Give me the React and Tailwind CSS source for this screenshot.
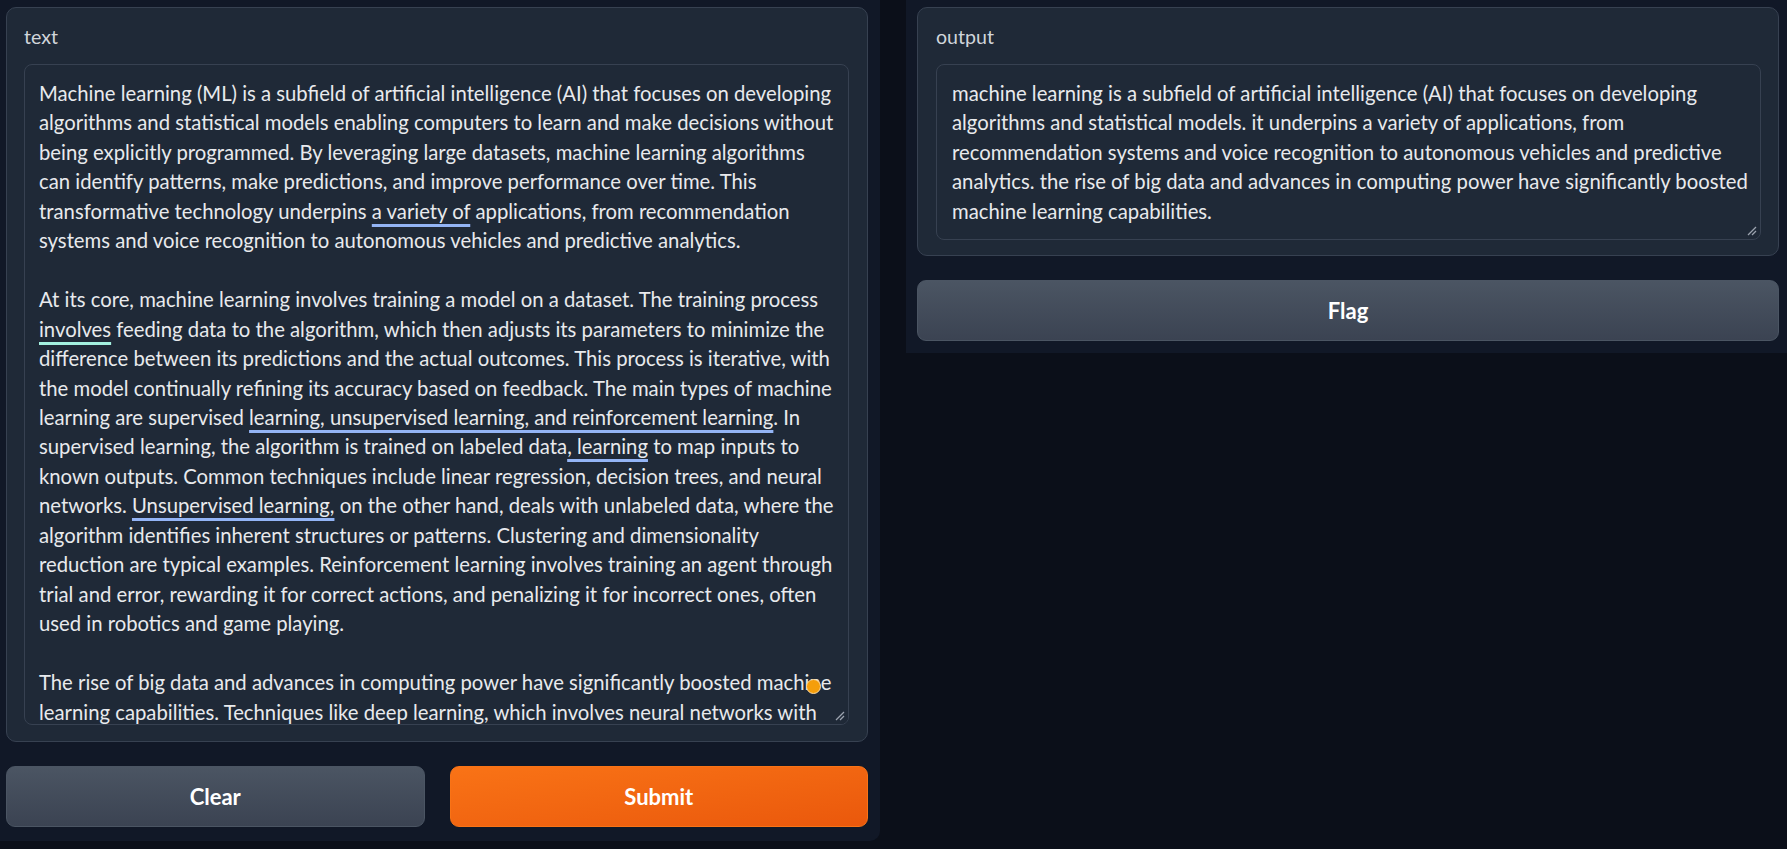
import React from "react";

const font = { fontFamily: "Lato, 'Noto Sans', sans-serif" };

function U({ children, teal }) {
  return (
    <span
      className={
        "underline decoration-[3px] underline-offset-[5px] [text-decoration-skip-ink:none] " +
        (teal ? "decoration-[#a3f0df]" : "decoration-[#93b4f5]")
      }
    >
      {children}
    </span>
  );
}

function Resize() {
  return (
    <svg className="absolute right-[3px] bottom-[3px]" width="10" height="10" viewBox="0 0 10 10">
      <line x1="1" y1="9" x2="9" y2="1" stroke="#9ca3af" strokeWidth="1.3" />
      <line x1="5" y1="9" x2="9" y2="5" stroke="#9ca3af" strokeWidth="1.3" />
    </svg>
  );
}

const leftLines = [
  "Machine learning (ML) is a subfield of artificial intelligence (AI) that focuses on developing",
  "algorithms and statistical models enabling computers to learn and make decisions without",
  "being explicitly programmed. By leveraging large datasets, machine learning algorithms",
  "can identify patterns, make predictions, and improve performance over time. This",
  <>transformative technology underpins <U>a variety of</U> applications, from recommendation</>,
  "systems and voice recognition to autonomous vehicles and predictive analytics.",
  "\u00a0",
  "At its core, machine learning involves training a model on a dataset. The training process",
  <><U teal>involves</U> feeding data to the algorithm, which then adjusts its parameters to minimize the</>,
  "difference between its predictions and the actual outcomes. This process is iterative, with",
  "the model continually refining its accuracy based on feedback. The main types of machine",
  <>learning are supervised <U>learning, unsupervised learning, and reinforcement learning</U>. In</>,
  <>supervised learning, the algorithm is trained on labeled data<U>, learning</U> to map inputs to</>,
  "known outputs. Common techniques include linear regression, decision trees, and neural",
  <>networks. <U>Unsupervised learning,</U> on the other hand, deals with unlabeled data, where the</>,
  "algorithm identifies inherent structures or patterns. Clustering and dimensionality",
  "reduction are typical examples. Reinforcement learning involves training an agent through",
  "trial and error, rewarding it for correct actions, and penalizing it for incorrect ones, often",
  "used in robotics and game playing.",
  "\u00a0",
  "The rise of big data and advances in computing power have significantly boosted machine",
  "learning capabilities. Techniques like deep learning, which involves neural networks with",
];

const rightLines = [
  "machine learning is a subfield of artificial intelligence (AI) that focuses on developing",
  "algorithms and statistical models. it underpins a variety of applications, from",
  "recommendation systems and voice recognition to autonomous vehicles and predictive",
  "analytics. the rise of big data and advances in computing power have significantly boosted",
  "machine learning capabilities.",
];

function Lines({ lines }) {
  return lines.map((l, i) => (
    <div key={i} className="whitespace-pre">
      {l}
    </div>
  ));
}

function Btn({ children, primary, className = "" }) {
  return (
    <button
      className={
        "h-[61px] rounded-[9px] border text-[22px] font-bold text-white " +
        (primary
          ? "border-[#f97316] bg-gradient-to-br from-[#f97316] to-[#ea580c] "
          : "border-[#4b5563] bg-gradient-to-b from-[#4b5563] to-[#3b4352] ") +
        className
      }
      style={font}
    >
      {children}
    </button>
  );
}

export default function App() {
  return (
    <div className="w-[1787px] h-[849px] bg-[#0b0f19] flex items-start gap-[26px] overflow-hidden" style={font}>
      <div className="w-[880px] shrink-0 bg-[#111827] rounded-br-[10px] pl-[6px] pr-[12px] pt-[7px] pb-[14px] flex flex-col gap-[24px]">
        <div className="bg-[#1f2937] border border-[#374151] rounded-[10px] pl-[17px] pr-[18px] pt-[14px] pb-[16px]">
          <div className="text-[19.6px] leading-[29px] text-[#d1d5db] mb-[13px]">text</div>
          <div className="relative h-[661px] border border-[#374151] rounded-[8px] bg-[#1f2937] overflow-hidden">
            <div className="pl-[14px] pt-[14px] text-[20.3px] leading-[29.45px] text-[#e8eaed]">
              <Lines lines={leftLines} />
            </div>
            <div className="absolute left-[781px] top-[614px] w-[15px] h-[15px] rounded-full bg-[#f59e0b] border border-[#fcd9a0]" />
            <div className="absolute right-0 bottom-0 w-[14px] h-[14px] bg-[#1f2937]" />
            <Resize />
          </div>
        </div>
        <div className="flex gap-[25px]">
          <Btn className="flex-1">Clear</Btn>
          <Btn primary className="flex-1">Submit</Btn>
        </div>
      </div>
      <div className="flex-1 bg-[#111827] pl-[11px] pr-[8px] pt-[7px] pb-[12px] flex flex-col gap-[24px]">
        <div className="bg-[#1f2937] border border-[#374151] rounded-[10px] pl-[18px] pr-[17px] pt-[14px] pb-[15px]">
          <div className="text-[19.6px] leading-[29px] text-[#d1d5db] mb-[13px]">output</div>
          <div className="relative h-[176px] border border-[#374151] rounded-[8px] bg-[#1f2937] overflow-hidden">
            <div className="pl-[15px] pt-[14px] text-[20.3px] leading-[29.45px] text-[#e8eaed]">
              <Lines lines={rightLines} />
            </div>
            <Resize />
          </div>
        </div>
        <Btn className="w-full">Flag</Btn>
      </div>
    </div>
  );
}
